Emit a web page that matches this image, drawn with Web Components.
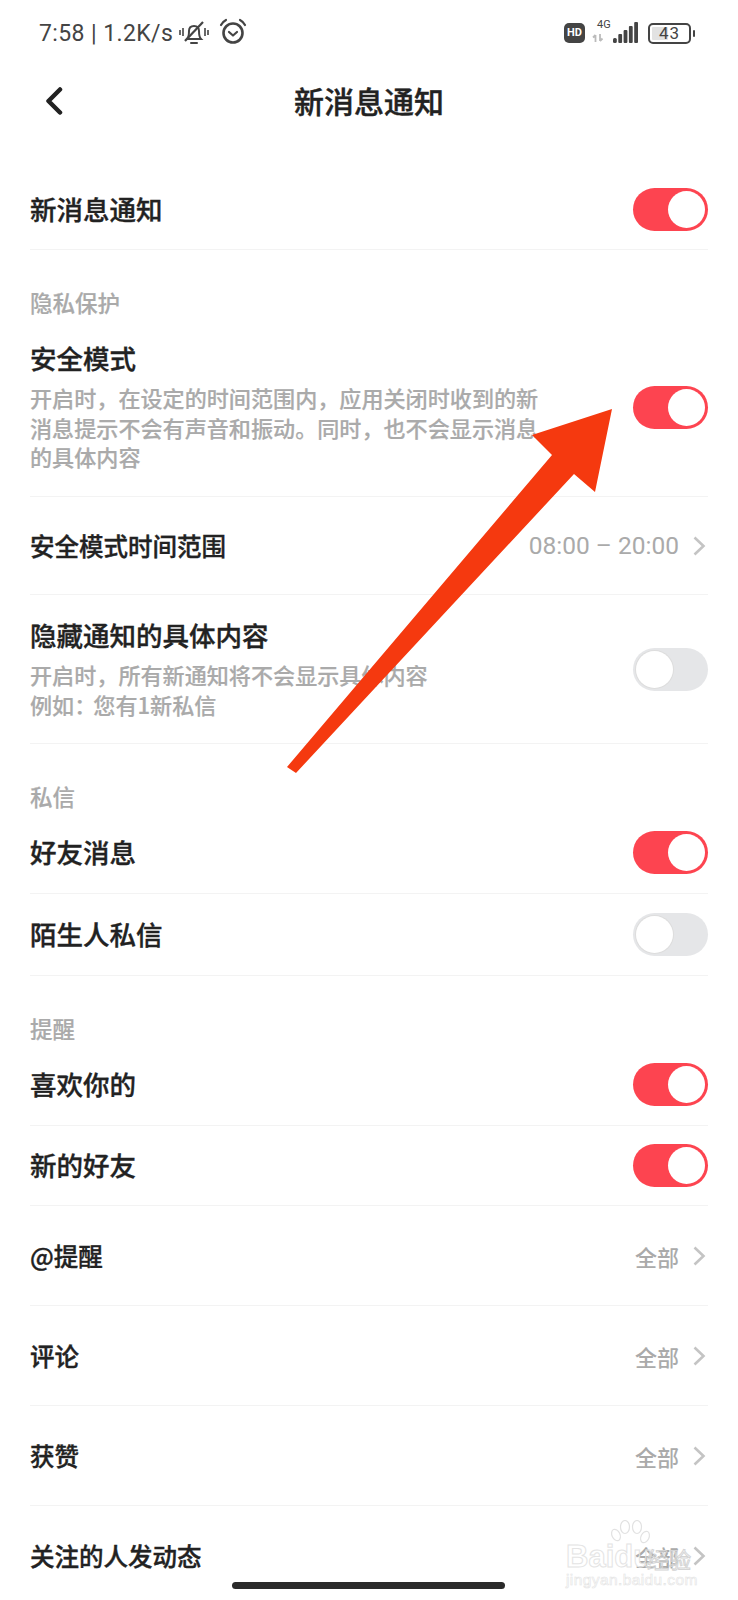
<!DOCTYPE html>
<html lang="zh">
<head>
<meta charset="utf-8">
<title>新消息通知</title>
<style>
html, body { margin: 0; padding: 0; background: #fff; }
body { width: 738px; height: 1600px; overflow: hidden; position: relative; font-family: "Noto Sans CJK SC", "Noto Sans", sans-serif; }
settings-list { padding: 34px 30px 0 30px; }
</style>
</head>
<body>
<status-bar></status-bar>
<nav-bar>新消息通知</nav-bar>
<settings-list>
  <settings-row h="80" toggle="on">新消息通知</settings-row>
  <section-label>隐私保护</section-label>
  <settings-row h="179" toggle="on">安全模式
    <span slot="desc">开启时，在设定的时间范围内，应用关闭时收到的新<br>消息提示不会有声音和振动。同时，也不会显示消息<br>的具体内容</span>
  </settings-row>
  <settings-row h="98" small value="08:00 – 20:00">安全模式时间范围</settings-row>
  <settings-row h="149" toggle="off">隐藏通知的具体内容
    <span slot="desc">开启时，所有新通知将不会显示具体内容<br>例如<span style="letter-spacing:-3px">：</span>您有1新私信</span>
  </settings-row>
  <section-label>私信</section-label>
  <settings-row h="82" toggle="on">好友消息</settings-row>
  <settings-row h="82" toggle="off">陌生人私信</settings-row>
  <section-label>提醒</section-label>
  <settings-row h="82" toggle="on">喜欢你的</settings-row>
  <settings-row h="80" toggle="on">新的好友</settings-row>
  <settings-row h="100" small value="全部">@提醒</settings-row>
  <settings-row h="100" small value="全部">评论</settings-row>
  <settings-row h="100" small value="全部">获赞</settings-row>
  <settings-row h="100" small value="全部" flat>关注的人发动态</settings-row>
</settings-list>
<arrow-mark></arrow-mark>
<baidu-mark></baidu-mark>
<home-bar></home-bar>
<script>
class StatusBar extends HTMLElement {
  constructor() {
    super();
    this.attachShadow({ mode: 'open' }).innerHTML = `
<style>
:host { display: flex; align-items: center; height: 66px; padding: 0 43px 0 39px; color: #444; font-family: Roboto, "Noto Sans", sans-serif; }
.time { font-size: 23px; letter-spacing: 0.4px; white-space: nowrap; }
.bell { margin-left: 6px; }
.alarm { margin-left: 10px; margin-top: -2px; }
.right { margin-left: auto; display: flex; align-items: center; }
.hd { width: 21px; height: 20px; border-radius: 5px; background: #444; color: #fff; font: 700 11px/20px Roboto, sans-serif; text-align: center; }
.net { position: relative; width: 46px; height: 24px; margin-left: 7px; }
.net span { position: absolute; left: 5px; top: -2px; font-size: 11px; line-height: 12px; }
.net svg { position: absolute; left: 0; top: 0; }
.batt { position: relative; box-sizing: border-box; width: 43px; height: 21px; margin-left: 10px; border: 2px solid #444; border-radius: 5px; font-size: 17px; line-height: 17px; text-align: center; letter-spacing: 1px; }
.batt i { position: absolute; left: 2px; top: 2px; bottom: 2px; width: 16px; background: #e2e2e2; border-radius: 1px; }
.batt b { position: relative; font-weight: 400; }
.tip { width: 2px; height: 7px; margin-left: 2px; background: #444; border-radius: 1px; }
</style>
<span class="time">7:58 | 1.2K/s</span>
<svg class="bell" width="30" height="28" viewBox="0 0 30 28" fill="none" stroke="#444" stroke-width="2">
  <path d="M8 20c2-2 2-4 2-8 0-3 2-5 5-5s5 2 5 5c0 4 0 6 2 8z"/>
  <path d="M12 24h6" stroke-linecap="round"/>
  <path d="M24 3 6 22" stroke-width="2.2"/>
  <path d="M1 11v5M4 9v8M26 9v8M29 11v5" stroke-width="1.6"/>
</svg>
<svg class="alarm" width="28" height="28" viewBox="0 0 28 28" fill="none" stroke="#444">
  <circle cx="14" cy="15" r="9.5" stroke-width="2.6"/>
  <path d="M10 14l4 3.5 4-3.5" stroke-width="2.2" stroke-linecap="round" stroke-linejoin="round"/>
  <path d="M2 7c1-2 3-4 5-5M26 7c-1-2-3-4-5-5" stroke-width="2.2" stroke-linecap="round"/>
</svg>
<div class="right">
  <div class="hd">HD</div>
  <div class="net">
    <span>4G</span>
    <svg width="46" height="24" viewBox="0 0 46 24">
      <path d="M3.500 21v-7M1 16.500l2.500-2.500M8 13v7M8 20l2.500-2.500" fill="none" stroke="#bbb" stroke-width="1.800"/>
      <g fill="#444">
        <rect x="21" y="17" width="3.800" height="5" rx="1.500"/>
        <rect x="26.300" y="13" width="3.800" height="9" rx="1"/>
        <rect x="31.600" y="9" width="3.800" height="13" rx="1"/>
        <rect x="36.900" y="5" width="3.800" height="17" rx="1"/>
        <rect x="42.200" y="1" width="3.800" height="21" rx="1"/>
      </g>
    </svg>
  </div>
  <div class="batt"><i></i><b>43</b></div>
  <div class="tip"></div>
</div>`;
  }
}

class NavBar extends HTMLElement {
  constructor() {
    super();
    this.attachShadow({ mode: 'open' }).innerHTML = `
<style>
:host { display: flex; align-items: center; justify-content: center; position: relative; box-sizing: border-box; height: 70px; padding-bottom: 2px; color: #222; font-size: 30px; font-weight: 500; -webkit-text-stroke: 0.4px #222; }
svg { position: absolute; left: 45px; top: 21px; }
</style>
<svg width="18" height="28" viewBox="0 0 18 28" fill="none" stroke="#222" stroke-width="4.500" stroke-linecap="round" stroke-linejoin="round"><path d="M15 2.500 3.500 14 15 25.500"/></svg>
<slot></slot>`;
  }
}

class SettingsList extends HTMLElement {
  constructor() {
    super();
    this.attachShadow({ mode: 'open' }).innerHTML = `
<style>:host { display: flex; flex-direction: column; }</style>
<slot></slot>`;
  }
}

class SectionLabel extends HTMLElement {
  constructor() {
    super();
    this.attachShadow({ mode: 'open' }).innerHTML = `
<style>:host { display: block; padding: 37px 0 1px; font-size: 22.500px; line-height: 30px; color: #aaa; font-weight: 500; -webkit-text-stroke: 0.2px #aaa; }</style>
<slot></slot>`;
  }
}

class ToggleSwitch extends HTMLElement {
  constructor() {
    super();
    this.attachShadow({ mode: 'open' }).innerHTML = `
<style>
:host { display: block; position: relative; width: 75px; height: 43px; border-radius: 22px; background: #fd4450; flex: none; }
:host([off]) { background: #e5e6e8; }
i { position: absolute; right: 3px; top: 3px; width: 37px; height: 37px; border-radius: 50%; background: #fff; }
:host([off]) i { right: auto; left: 3px; box-shadow: 0 0 0 1px #ddd; }
</style>
<i></i>`;
  }
}

class SettingsRow extends HTMLElement {
  constructor() {
    super();
    this.attachShadow({ mode: 'open' }).innerHTML = `
<style>
:host { display: flex; align-items: center; box-sizing: border-box; border-bottom: 1px solid #f3f3f3; color: #222; font-size: 26.500px; line-height: 36px; font-weight: 500; }
:host([small]) { font-size: 24.500px; }
:host([flat]) { border-bottom: 0; }
.text { flex: 1; min-width: 0; -webkit-text-stroke: 0.35px #222; margin-bottom: 2px; }
:host([small]) .text { margin-bottom: 0; }
.desc { font-size: 22.100px; line-height: 29.500px; color: #aaa; margin-top: 7px; font-weight: 500; -webkit-text-stroke: 0.2px #aaa; }
.end { display: flex; align-items: center; gap: 13px; color: #aaa; font-size: 22px; font-weight: 500; margin-right: -1px; }
.end .num { font-size: 24.500px; font-family: Roboto, "Noto Sans CJK SC", sans-serif; font-weight: 400; }
</style>
<div class="text"><slot></slot><div class="desc"><slot name="desc"></slot></div></div>
<div class="end"></div>`;
  }
  connectedCallback() {
    this.style.height = this.getAttribute('h') + 'px';
    const end = this.shadowRoot.querySelector('.end');
    const toggle = this.getAttribute('toggle');
    const value = this.getAttribute('value');
    if (!this.querySelector('[slot=desc]')) this.shadowRoot.querySelector('.desc').style.display = 'none';
    if (toggle) {
      const sw = document.createElement('toggle-switch');
      if (toggle == 'off') sw.setAttribute('off', '');
      sw.style.marginRight = '1px';
      end.appendChild(sw);
    }
    if (value) {
      const label = document.createElement('span');
      label.textContent = value;
      if (value.includes(':')) label.className = 'num';
      end.appendChild(label);
      end.insertAdjacentHTML('beforeend', `<svg width="15" height="20" viewBox="0 0 15 20" fill="none" stroke="#c4c4c4" stroke-width="2.600" style="margin-right:2px"><path d="M2.500 1.500 11.500 10 2.500 18.500"/></svg>`);
    }
  }
}

// annotation painted over the screenshot
class ArrowMark extends HTMLElement {
  constructor() {
    super();
    this.attachShadow({ mode: 'open' }).innerHTML = `
<style>:host { display: block; position: absolute; left: 0; top: 0; pointer-events: none; }</style>
<svg width="738" height="1600" viewBox="0 0 738 1600" style="display:block"><polygon points="612,409 532,435 552,455 287,767 296,773 574,474 595,492" fill="#f5390f"/></svg>`;
  }
}

class BaiduMark extends HTMLElement {
  constructor() {
    super();
    this.attachShadow({ mode: 'open' }).innerHTML = `
<style>
:host { display: block; position: absolute; left: 564px; top: 1518px; width: 140px; height: 70px; color: transparent; font-family: "Liberation Sans", sans-serif; pointer-events: none; }
div { position: absolute; white-space: nowrap; -webkit-text-stroke: 1px #e4e4e4; }
.a { left: 2px; top: 21px; font-size: 31px; line-height: 36px; font-weight: 700; }
.b { left: 83px; top: 26px; font-size: 22px; line-height: 28px; font-family: "Noto Sans CJK SC", sans-serif; -webkit-text-stroke: 1px #d4d4d4; }
.c { left: 2px; top: 53px; font-size: 15.500px; line-height: 18px; letter-spacing: 0.4px; -webkit-text-stroke: 0.6px #e4e4e4; }
svg { position: absolute; left: 46px; top: 2px; }
</style>
<svg width="42" height="32" viewBox="0 0 42 32" fill="none" stroke="#e2e2e2" stroke-width="1.200">
  <ellipse cx="6" cy="15" rx="4" ry="6" transform="rotate(-25 6 15)"/>
  <ellipse cx="15" cy="7" rx="4.500" ry="6.500"/>
  <ellipse cx="27" cy="7" rx="4.500" ry="6.500"/>
  <ellipse cx="35" cy="17" rx="4" ry="6" transform="rotate(25 35 17)"/>
</svg>
<div class="a">Baidu</div><div class="b">经验</div><div class="c">jingyan.baidu.com</div>`;
  }
}

class HomeBar extends HTMLElement {
  constructor() {
    super();
    this.attachShadow({ mode: 'open' }).innerHTML = `
<style>:host { display: block; position: absolute; left: 232px; top: 1582px; width: 273px; height: 7px; border-radius: 4px; background: #2a2a2a; }</style>`;
  }
}

customElements.define('status-bar', StatusBar);
customElements.define('nav-bar', NavBar);
customElements.define('settings-list', SettingsList);
customElements.define('section-label', SectionLabel);
customElements.define('toggle-switch', ToggleSwitch);
customElements.define('settings-row', SettingsRow);
customElements.define('arrow-mark', ArrowMark);
customElements.define('baidu-mark', BaiduMark);
customElements.define('home-bar', HomeBar);
</script>
</body>
</html>
